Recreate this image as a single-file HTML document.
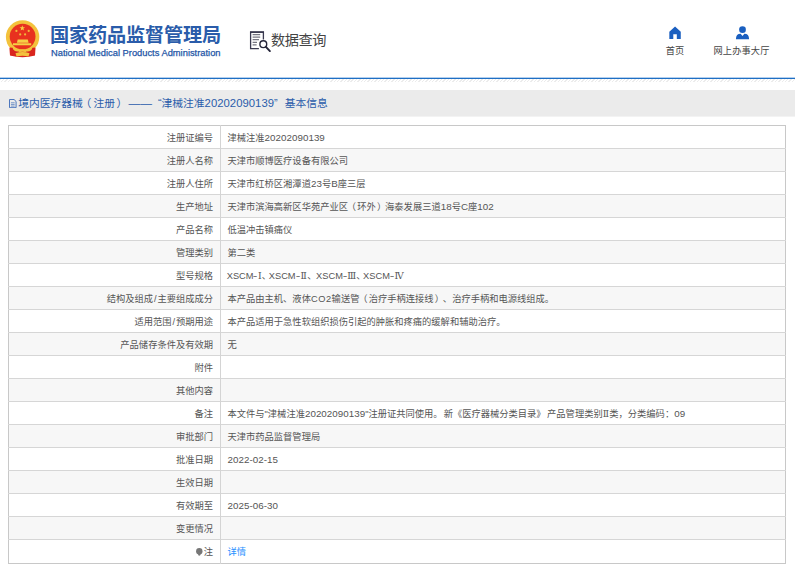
<!DOCTYPE html>
<html lang="zh-CN">
<head>
<meta charset="utf-8">
<title>数据查询</title>
<style>
html,body{margin:0;padding:0;background:#fff;}
body{text-spacing-trim:space-all;width:795px;height:569px;overflow:hidden;position:relative;font-family:"Liberation Sans","Noto Sans CJK SC",sans-serif;color:#333;}
.abs{position:absolute;white-space:nowrap;}
#title{left:50px;top:22.6px;font-size:19.2px;font-weight:bold;color:#2a5caa;line-height:26px;letter-spacing:-0.2px;}
#sub{left:51px;top:46.9px;font-size:9.34px;color:#2456a6;-webkit-text-stroke:0.25px #2456a6;line-height:12px;}
#sjcx{left:271px;top:30.2px;font-size:14.2px;letter-spacing:-0.4px;color:#444;line-height:20px;}
.nav{font-size:9.2px;color:#444;line-height:12px;text-align:center;}
#hline{left:0;top:77px;width:795px;height:2px;background:linear-gradient(to bottom,#b4d0ee 0,#b4d0ee 1px,#1f6fc4 1px,#1f6fc4 2px);}
#hatch{left:0;top:79px;width:795px;height:3px;background:repeating-linear-gradient(135deg,#ececec 0,#ececec 1px,#fff 1px,#fff 2.4px);}
#band{left:0;top:90px;width:795px;height:27px;background:linear-gradient(to bottom,#ebebeb 0,#ebebeb 26px,#f3f3f3 26px,#f3f3f3 27px);}
#bandtxt{left:18.2px;top:96.3px;font-size:10.78px;line-height:14px;color:#2a5caa;}
table{position:absolute;left:8px;top:125px;width:778px;border-collapse:collapse;table-layout:fixed;font-size:9.27px;color:#555;}
table{border:1px solid #c8c8c8;}
td{height:21px;padding:1px 0 0 0;border-top:1px solid #d6d6d6;line-height:12px;vertical-align:middle;white-space:nowrap;overflow:hidden;}
tr:first-child td{border-top:none;}
td.l{width:204px;text-align:right;padding-right:7px;border-right:1px solid #d4d4d4;}
td.v{padding-left:6.5px;}
tr:last-child td{height:22px;}
.sl{padding:0 0.9px;}
tr:nth-child(even) td{background:#f7f7f7;}
a{color:#1e90ff;text-decoration:none;}
.n{font-size:9.8px;letter-spacing:0.03px;line-height:10px;}
.rn{font-family:"DejaVu Serif",serif;}
.g{display:inline-block;white-space:nowrap;vertical-align:baseline;}
.g .rn{display:inline-block;text-align:center;}
.hy{display:inline-block;width:4.3px;text-align:center;transform:scaleX(1.5);}
.pl{position:relative;left:-1.2px;}
.pr{position:relative;left:1.2px;}
.w{letter-spacing:0.55px;}
#bandtxt .n{font-size:11.3px;letter-spacing:0.03px;line-height:12px;}
#bandtxt .d{font-size:11.75px;line-height:14px;}
</style>
</head>
<body>
<!-- emblem -->
<svg class="abs" style="left:0;top:14px" width="50" height="48" viewBox="0 0 50 48">
  <path d="M9.7 34 L14 38 L31 38 L35.2 34 L35 41 Q22.5 44.5 10 41 Z" fill="#d9251d"/>
  <circle cx="22.6" cy="23" r="16.7" fill="#f3c23c"/>
  <circle cx="22.6" cy="22.6" r="12.9" fill="#e8321f"/>
  <path d="M9.6 33.4 L12.6 33.8 Q13.5 37.6 17.5 37.6 L27.5 37.6 Q31.5 37.6 32.4 33.8 L35.4 33.4 L35 41.6 Q22.5 45 10 41.6 Z" fill="#d9251d"/>
  <path d="M15.5 39.3 Q22.5 36.8 29.5 39.3 L28.5 42.6 Q22.5 41.1 16.5 42.6 Z" fill="#f3c23c"/>
  <path d="M18 36.5 Q22.5 33.8 27 36.5 L25.5 38.2 Q22.5 36.8 19.5 38.2 Z" fill="#f3c23c"/>
  <path d="M13 29.2 H31.2 V31.2 H13 Z M17.7 25.6 H27.8 L28.6 28.8 H16.9 Z" fill="#f6cf45"/>
  <polygon points="22.3,11.3 23.0,13.3 25.1,13.3 23.4,14.6 24.0,16.6 22.3,15.4 20.6,16.6 21.2,14.6 19.5,13.3 21.6,13.3" fill="#f6cf45"/>
  <circle cx="16.4" cy="16.9" r="1.1" fill="#f0b83a"/><circle cx="28.7" cy="16.9" r="1.1" fill="#f0b83a"/>
  <circle cx="20.2" cy="20.4" r="1.1" fill="#f0b83a"/><circle cx="25.1" cy="20.4" r="1.1" fill="#f0b83a"/>
</svg>
<div id="title" class="abs">国家药品监督管理局</div>
<div id="sub" class="abs">National Medical Products Administration</div>

<!-- data query icon -->
<svg class="abs" style="left:249px;top:30px" width="24" height="24" viewBox="0 0 24 24" fill="none">
  <path d="M14.4 9.4 V2.1 H1.6 V18.7 H9.9" stroke="#3a3a50" stroke-width="1.3"/>
  <path d="M1 2.1 H15" stroke="#33334a" stroke-width="1.5"/>
  <path d="M3.6 4.6 H11.2 M3.6 7.2 H11.2 M3.6 9.7 H10 M3.6 12.3 H8 M3.6 14.8 H7.6" stroke="#777782" stroke-width="1.2"/>
  <circle cx="14.3" cy="14.2" r="3.4" stroke="#26263a" stroke-width="1.4" fill="#fff"/>
  <path d="M16.9 16.8 L20.9 21.1" stroke="#26263a" stroke-width="1.9" stroke-linecap="round"/>
</svg>
<div id="sjcx" class="abs">数据查询</div>

<!-- home -->
<svg class="abs" style="left:667.85px;top:26px" width="14.1" height="13.6" viewBox="0 0 16 14" preserveAspectRatio="none">
  <path d="M8 0.5 L14.5 6 V13.5 H10 V8.5 H6 V13.5 H1.5 V6 Z" fill="#1a5fc0"/>
</svg>
<div class="abs nav" style="left:655px;top:45.4px;width:40px;">首页</div>
<!-- person -->
<svg class="abs" style="left:734.6px;top:26.4px" width="15" height="13.7" viewBox="0 0 16 15" preserveAspectRatio="none">
  <circle cx="8" cy="4" r="3.6" fill="#1a5fc0"/>
  <path d="M1 14.5 Q1 8.5 6 8.5 L8 11 L10 8.5 Q15 8.5 15 14.5 Z" fill="#1a5fc0"/>
</svg>
<div class="abs nav" style="left:701.5px;top:45.4px;width:80px;letter-spacing:0.15px;">网上办事大厅</div>

<div id="hline" class="abs"></div>
<div id="hatch" class="abs"></div>
<div id="band" class="abs"></div>
<svg class="abs" style="left:9.2px;top:99px" width="7.6" height="9.2" viewBox="0 0 9 11" preserveAspectRatio="none" fill="none" stroke="#3f6db8" stroke-width="1.1"><path d="M0.6 0.6 H6 L8.4 3 V10.4 H0.6 Z"/><path d="M2.3 4.5 H6.7 M2.3 6.5 H6.7 M2.3 8.5 H6.7" stroke-width="0.8"/></svg>
<div id="bandtxt" class="abs">境内医疗器械<span class="pl" style="left:-2.2px">（</span>注册<span class="pr" style="left:1.4px">）</span><span class="d" style="margin-left:2.6px">——</span><span style="margin-left:6px">“津械注准</span><span class="n">20202090139</span>”<span style="margin-left:7px">基本信息</span></div>

<table>
<tr><td class="l">注册证编号</td><td class="v">津械注准<span class="n">20202090139</span></td></tr>
<tr><td class="l">注册人名称</td><td class="v">天津市顺博医疗设备有限公司</td></tr>
<tr><td class="l">注册人住所</td><td class="v">天津市红桥区湘潭道<span class="n">23</span>号<span class="n">B</span>座三层</td></tr>
<tr><td class="l">生产地址</td><td class="v">天津市滨海高新区华苑产业区<span class="pl">（</span>环外<span class="pr">）</span>海泰发展三道<span class="n">18</span>号<span class="n">C</span>座<span class="n">102</span></td></tr>
<tr><td class="l">产品名称</td><td class="v">低温冲击镇痛仪</td></tr>
<tr><td class="l">管理类别</td><td class="v">第二类</td></tr>
<tr><td class="l">型号规格</td><td class="v"><span class="g" style="width:42.1px;margin-left:-0.8px">XSCM<span class="hy">-</span><span class="rn" style="width:4px">Ⅰ</span>、</span><span class="g" style="width:47.3px">XSCM<span class="hy">-</span><span class="rn" style="width:7.4px">Ⅱ</span>、</span><span class="g" style="width:47px">XSCM<span class="hy">-</span><span class="rn" style="width:9px">Ⅲ</span>、</span><span class="g">XSCM<span class="hy">-</span><span class="rn" style="width:10px">Ⅳ</span></span></td></tr>
<tr><td class="l">结构及组成<span class="sl">/</span>主要组成成分</td><td class="v">本产品由主机、液体<span class="w">CO2</span>输送管<span class="pl">（</span>治疗手柄连接线<span class="pr">）</span>、治疗手柄和电源线组成。</td></tr>
<tr><td class="l">适用范围<span class="sl">/</span>预期用途</td><td class="v">本产品适用于急性软组织损伤引起的肿胀和疼痛的缓解和辅助治疗。</td></tr>
<tr><td class="l">产品储存条件及有效期</td><td class="v">无</td></tr>
<tr><td class="l">附件</td><td class="v"></td></tr>
<tr><td class="l">其他内容</td><td class="v"></td></tr>
<tr><td class="l">备注</td><td class="v">本文件与"津械注准<span class="n">20202090139</span>"注册证共同使用<span style="margin-right:1px">。</span>新《医疗器械分类目录<span style="margin-right:1.5px">》</span>产品管理类别<span class="rn" style="display:inline-block;width:6.6px;text-align:center">Ⅱ</span>类，分类编码：<span class="n">09</span></td></tr>
<tr><td class="l">审批部门</td><td class="v">天津市药品监督管理局</td></tr>
<tr><td class="l">批准日期</td><td class="v"><span class="n">2022-02-15</span></td></tr>
<tr><td class="l">生效日期</td><td class="v"></td></tr>
<tr><td class="l">有效期至</td><td class="v"><span class="n">2025-06-30</span></td></tr>
<tr><td class="l">变更情况</td><td class="v"></td></tr>
<tr><td class="l"><svg width="6.6" height="8" viewBox="0 0 8 9.7" style="vertical-align:-0.6px;margin-right:1.2px"><circle cx="4" cy="3.9" r="3.9" fill="#777"/><path d="M2.3 6.5 H5.7 L5.3 8.4 H2.7 Z" fill="#777"/><rect x="3" y="8.6" width="2" height="1" fill="#999"/></svg>注</td><td class="v"><a>详情</a></td></tr>
</table>
</body>
</html>
